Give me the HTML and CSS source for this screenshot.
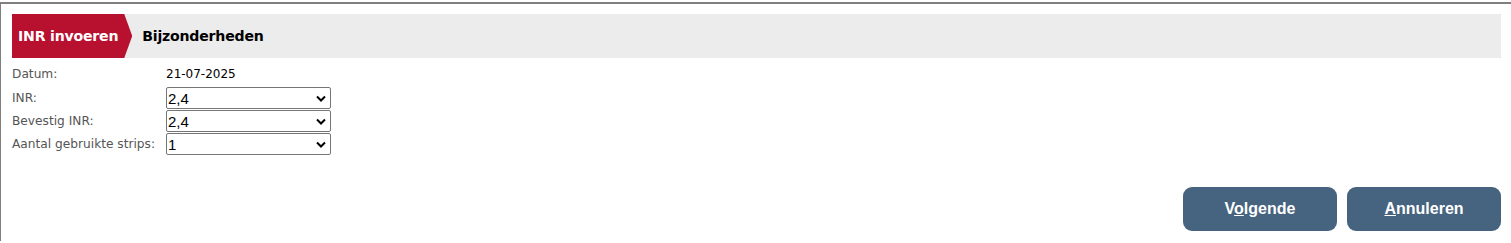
FILE: index.html
```html
<!DOCTYPE html>
<html lang="nl">
<head>
<meta charset="utf-8">
<title>INR invoeren</title>
<link rel="stylesheet" href="styles.css">
</head>
<body>
<div class="frame">
  <div class="steps">
    <div class="step active">INR invoeren</div>
    <div class="step">Bijzonderheden</div>
  </div>
  <div class="form">
    <div class="row">
      <span class="label">Datum:</span>
      <span class="value">21-07-2025</span>
    </div>
    <div class="row">
      <span class="label">INR:</span>
      <select class="sel"><option>2,4</option></select>
    </div>
    <div class="row">
      <span class="label">Bevestig INR:</span>
      <select class="sel"><option>2,4</option></select>
    </div>
    <div class="row">
      <span class="label">Aantal gebruikte strips:</span>
      <select class="sel"><option>1</option></select>
    </div>
  </div>
  <div class="actions">
    <button class="btn">V<u>o</u>lgende</button>
    <button class="btn"><u>A</u>nnuleren</button>
  </div>
</div>
</body>
</html>
```

FILE: styles.css
```css
html, body {
  margin: 0;
  padding: 0;
  background: #fff;
}
body {
  padding-top: 2px;
  font-family: "DejaVu Sans", Verdana, sans-serif;
}
.frame {
  border-top: 2px solid #7f7f7f;
  border-left: 1px solid #7f7f7f;
  height: 239px;
  box-sizing: border-box;
  padding: 10px 10px 0 11px;
}
.steps {
  display: flex;
  align-items: center;
  height: 44px;
  background: #ececec;
}
.step {
  font-weight: bold;
  font-size: 14.1px;
  color: #000;
  padding: 0 0 0 10px;
  letter-spacing: -0.2px;
}
.step.active {
  background: #b8102f;
  color: #fff;
  height: 44px;
  line-height: 44px;
  padding: 0 14px 0 6px;
  clip-path: polygon(0 0, calc(100% - 8px) 0, 100% 50%, calc(100% - 8px) 100%, 0 100%);
}
.form {
  padding-top: 9px;
  display: flex;
  flex-direction: column;
  gap: 1px;
}
.row {
  display: flex;
  align-items: center;
  min-height: 22px;
}
.row:first-child {
  min-height: 19px;
  align-items: flex-start;
}
.label {
  width: 154px;
  font-size: 12.2px;
  color: #555;
}
.value {
  font-size: 12px;
  color: #000;
}
.sel {
  width: 165px;
  height: 22px;
  box-sizing: border-box;
  border: 1px solid #767676;
  border-radius: 2px;
  background: #fff;
  font-family: "Liberation Sans", Arial, sans-serif;
  font-size: 15px;
  color: #000;
  padding: 0 0 0 1px;
  appearance: none;
  -webkit-appearance: none;
  background-image: url("data:image/svg+xml,%3Csvg xmlns='http://www.w3.org/2000/svg' width='10' height='7' viewBox='0 0 10 7'%3E%3Cpath d='M1 1.5 L5 5.5 L9 1.5' fill='none' stroke='%23000' stroke-width='2'/%3E%3C/svg%3E");
  background-repeat: no-repeat;
  background-position: right 4px center;
}
.actions {
  display: flex;
  justify-content: flex-end;
  gap: 10px;
  margin-top: 32px;
}
.btn {
  width: 154px;
  height: 44px;
  border: none;
  border-radius: 9px;
  background: #46637f;
  color: #fff;
  font-family: "Liberation Sans", Arial, sans-serif;
  font-weight: bold;
  font-size: 16px;
}
```
